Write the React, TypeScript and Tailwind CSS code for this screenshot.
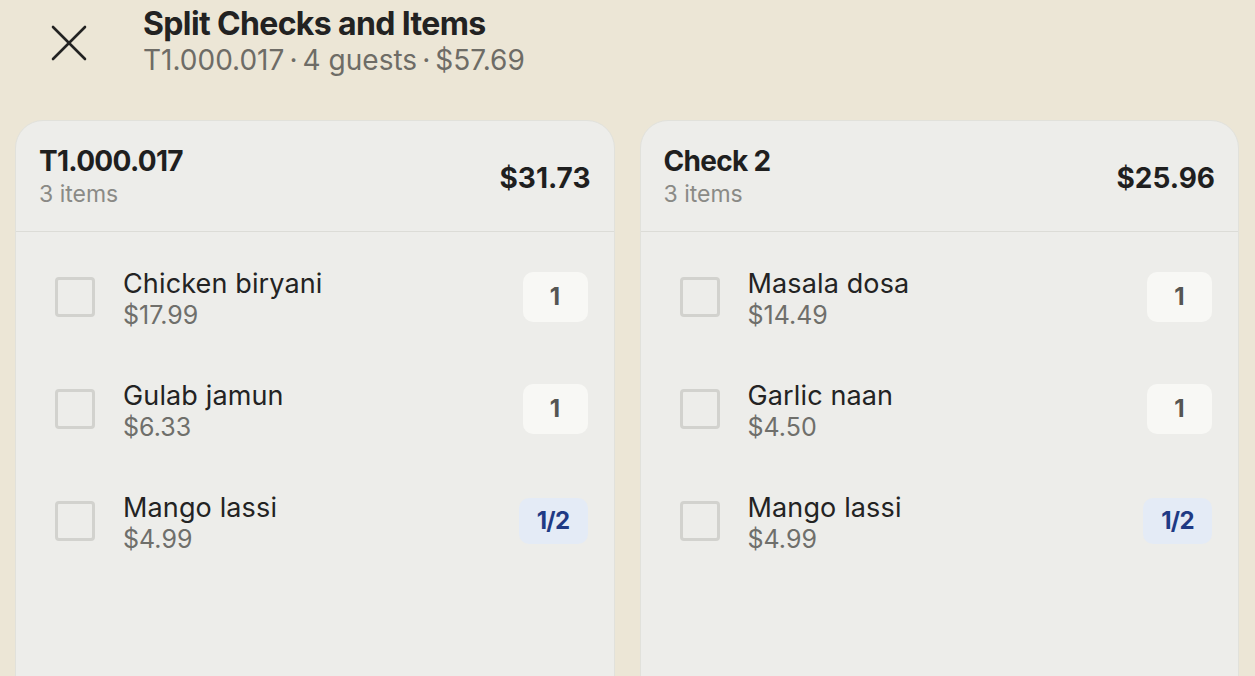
import React from 'react';

type Item = { name: string; price: string; qty: string; split?: boolean };
type Check = { title: string; count: string; total: string; items: Item[] };

const checks: Check[] = [
  {
    title: 'T1.000.017',
    count: '3 items',
    total: '$31.73',
    items: [
      { name: 'Chicken biryani', price: '$17.99', qty: '1' },
      { name: 'Gulab jamun', price: '$6.33', qty: '1' },
      { name: 'Mango lassi', price: '$4.99', qty: '1/2', split: true },
    ],
  },
  {
    title: 'Check 2',
    count: '3 items',
    total: '$25.96',
    items: [
      { name: 'Masala dosa', price: '$14.49', qty: '1' },
      { name: 'Garlic naan', price: '$4.50', qty: '1' },
      { name: 'Mango lassi', price: '$4.99', qty: '1/2', split: true },
    ],
  },
];

function CloseIcon() {
  return (
    <svg width="36" height="36" viewBox="0 0 36 36" fill="none" stroke="#222" strokeWidth="2.6" strokeLinecap="round">
      <path d="M2 2 L34 34" />
      <path d="M34 2 L2 34" />
    </svg>
  );
}

function CheckCard({ check }: { check: Check }) {
  return (
    <div className="h-[560px] rounded-t-[28px] border border-[#e1e1db] bg-[#ededea]">
      {/* Card header */}
      <div className="flex h-[111px] items-start justify-between border-b border-[#dcdcd7] px-[23px]">
        <div className="flex flex-col pt-[25px]">
          <span className="text-[28px] font-bold leading-[30px] tracking-[-0.025em] text-[#1f1f1f]">{check.title}</span>
          <span className="text-[23px] leading-[36px] text-[#8a8a86]">{check.count}</span>
        </div>
        <span className="pt-[41px] text-[28px] font-bold leading-[32px] text-[#1f1f1f]">{check.total}</span>
      </div>

      {/* Items */}
      <div className="pt-[9px]">
        {check.items.map((item) => (
          <div key={item.name} className="flex h-[112px] items-center pl-[39px] pr-[26px]">
            <div className="h-[40px] w-[40px] rounded-[4px] border-[3px] border-[#d2d2ce]" />
            <div className="ml-[28px] mt-[4px] flex flex-1 flex-col">
              <span className="text-[27px] leading-[32px] tracking-[0.005em] text-[#232323]">{item.name}</span>
              <span className="text-[25px] leading-[30px] text-[#6f6f6b]">{item.price}</span>
            </div>
            {item.split ? (
              <div className="flex h-[46px] w-[69px] items-center justify-center rounded-[10px] bg-[#e4ebf6] text-[24px] font-bold tracking-[-0.03em] text-[#1f3a84]">
                {item.qty}
              </div>
            ) : (
              <div className="flex h-[50px] w-[65px] items-center justify-center rounded-[10px] bg-[#f8f8f5] text-[24px] font-bold text-[#555552]">
                {item.qty}
              </div>
            )}
          </div>
        ))}
      </div>
    </div>
  );
}

export default function App() {
  return (
    <div className="h-[676px] w-full overflow-hidden bg-[#ece6d6] font-['Inter',sans-serif]">
      {/* Top bar */}
      <div className="flex h-[120px] items-start pl-[51px]">
        <div className="pt-[25px]">
          <CloseIcon />
        </div>
        <div className="ml-[56px] flex flex-col pt-[4px]">
          <span className="text-[32px] font-bold leading-[40px] tracking-[-0.02em] text-[#222]">Split Checks and Items</span>
          <span className="text-[28px] leading-[32px] text-[#6e6c66]">T1.000.017{'\u2009·\u2009'}4 guests{'\u2009·\u2009'}$57.69</span>
        </div>
      </div>

      {/* Checks */}
      <div className="grid grid-cols-2 gap-[25px] pl-[15px] pr-[16px]">
        {checks.map((c) => (
          <CheckCard key={c.title} check={c} />
        ))}
      </div>
    </div>
  );
}
